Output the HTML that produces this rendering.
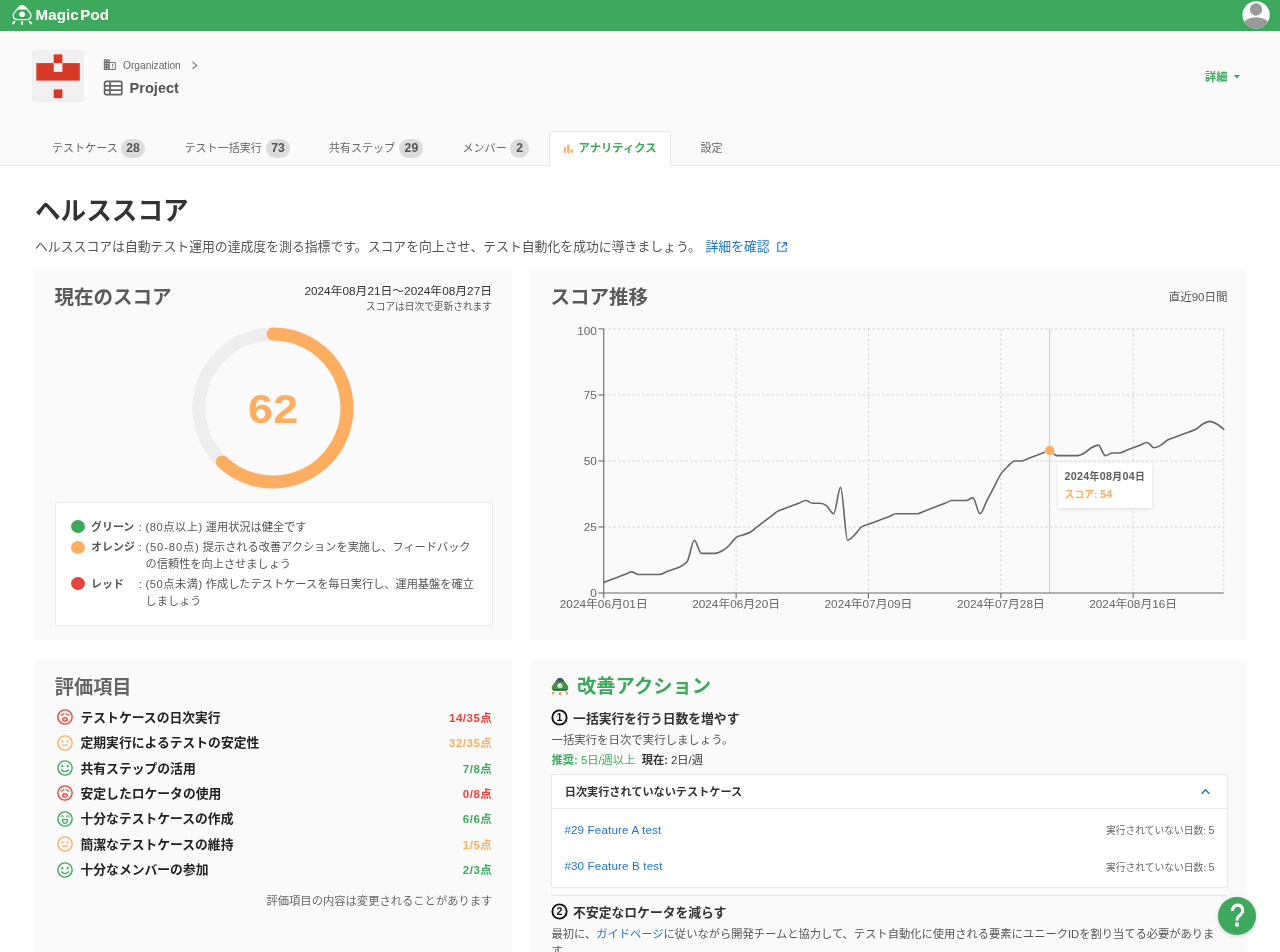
<!DOCTYPE html>
<html lang="ja">
<head>
<meta charset="utf-8">
<title>MagicPod - ヘルススコア</title>
<style>
*{box-sizing:border-box;margin:0;padding:0}
html,body{width:1280px;height:952px;overflow:hidden;background:#fff}
body{font-family:"Liberation Sans","Noto Sans CJK JP",sans-serif;color:#555;position:relative;-webkit-font-smoothing:antialiased}
.abs{position:absolute;white-space:nowrap}
b,.b{font-weight:700}
#hdr{left:0;top:0;width:1280px;height:30.5px;background:#3da95c}
#sub{left:0;top:30.5px;width:1280px;height:135px;background:#fafafa;border-bottom:1px solid #e9e9e9}
.logo{left:35.6px;top:4px;height:22px;line-height:22px;font-size:15.05px;font-weight:700;color:#fff;letter-spacing:0.1px}
.org{left:123px;top:57px;height:18px;line-height:18px;font-size:10.2px;color:#666}
.prj{left:129.5px;top:78px;height:20px;line-height:20px;font-size:14.6px;font-weight:700;color:#555}
.tab{top:138px;height:20px;line-height:20px;font-size:11.05px;color:#666}
.badge{top:138.6px;height:19px;line-height:19px;border-radius:9.5px;background:#dcdcdc;color:#555;font-size:12.2px;font-weight:700;text-align:center}
#atab{left:548.5px;top:131px;width:122px;height:35px;background:#fff;border:1px solid #e6e6e6;border-bottom:none;border-radius:4px 4px 0 0}
h1{left:35px;top:194px;height:34px;line-height:34px;font-size:25.6px;font-weight:700;color:#333}
.lead{left:35px;top:237px;height:20px;line-height:20px;font-size:12.85px;color:#555}
.card{background:#fafafa;border-radius:2px}
.ct{font-size:19.5px;font-weight:700;color:#5a5a5a;height:28px;line-height:28px}
.rowt{height:20px;line-height:20px;font-size:12.8px;font-weight:700;color:#222}
.rows{height:20px;line-height:20px;font-size:11.5px;font-weight:700;letter-spacing:0.5px}
.lg{font-size:11.2px;color:#555;height:17.3px;line-height:17.3px}
.lgb{font-weight:700;color:#555;font-size:10.95px}
.ls{letter-spacing:0.55px}
.dot{width:13.7px;height:13.1px;border-radius:50%}
svg text{font-family:"Liberation Sans","Noto Sans CJK JP",sans-serif}
.ih{font-size:12.8px;font-weight:700;color:#333;height:20px;line-height:20px}
.ip{font-size:11.28px;color:#555;height:18px;line-height:18px}
a{color:#1f75c9;text-decoration:none}
.d{font-size:10.7px}
</style>
</head>
<body>
<div id="wrap" style="position:absolute;left:0;top:0;width:1280px;height:952px;overflow:hidden;will-change:transform">
<!-- header -->
<div id="hdr" class="abs"></div>
<svg class="abs" style="left:11px;top:3px" width="23" height="24" viewBox="0 0 23 24" fill="none" stroke="#fff" stroke-width="1.25" stroke-linecap="round" stroke-linejoin="round">
  <path d="M11.1 2.5 C9.3 2.5 8.2 3.6 7.2 4.9 L3.0 10.2 C1.2 12.6 2.2 16.7 6.6 16.7 L15.6 16.7 C20.0 16.7 21.0 12.6 19.2 10.2 L15.0 4.9 C14.0 3.6 12.9 2.5 11.1 2.5 Z"/>
  <path d="M11.1 2.6 C9.5 2.6 8.4 3.6 7.5 4.8 L6.4 6.2 L15.8 6.2 L14.7 4.8 C13.8 3.6 12.7 2.6 11.1 2.6 Z" fill="#fff" stroke-width="0.6"/>
  <circle cx="11.1" cy="11.2" r="2.8" fill="#fff" stroke="none"/>
  <path d="M3.4 18.6 L2.2 20.4 M11.1 19.0 L11.1 21.0 M18.8 18.6 L20.0 20.4" stroke-width="1.9"/>
</svg>
<div class="abs logo">Magic<span style="margin-left:1.5px">Pod</span></div>
<svg class="abs" style="left:1242px;top:1px" width="29" height="29" viewBox="0 0 29 29">
  <defs><clipPath id="avc"><circle cx="14.1" cy="13.9" r="13.65"/></clipPath></defs>
  <circle cx="14.1" cy="13.9" r="13.65" fill="#fff"/>
  <g clip-path="url(#avc)" fill="#999"><circle cx="14.05" cy="8.5" r="6.15"/><ellipse cx="14.1" cy="27" rx="14.5" ry="10.8"/></g>
</svg>

<!-- project header -->
<div id="sub" class="abs"></div>
<svg class="abs" style="left:32px;top:50px" width="52" height="52" viewBox="0 0 52 52">
  <rect width="52" height="52" rx="3" fill="#f0f0f0"/>
  <g fill="#d63a27"><rect x="21.7" y="4.4" width="8.7" height="8.8"/><rect x="4.3" y="13.1" width="43.5" height="17.5"/><rect x="21.7" y="39.4" width="8.7" height="8.7"/></g>
  <rect x="21.7" y="13.1" width="8.7" height="8.8" fill="#f0f0f0"/>
</svg>
<svg class="abs" style="left:103px;top:59px" width="14" height="12" viewBox="0 0 14 12">
  <rect x="0.8" y="0.4" width="6" height="10.6" fill="#707070"/>
  <g fill="#f4f4f4"><rect x="1.9" y="1.6" width="1" height="0.9"/><rect x="1.9" y="4" width="1" height="0.9"/><rect x="1.9" y="6.4" width="1" height="0.9"/><rect x="1.9" y="8.8" width="1" height="0.9"/><rect x="4" y="1.7" width="1.6" height="0.7"/><rect x="4" y="4.1" width="1.6" height="0.7"/><rect x="4" y="6.5" width="1.6" height="0.7"/><rect x="4" y="8.9" width="1.6" height="0.7"/></g>
  <path d="M6.8 3.5 H12.3 V10.5 H6.8" fill="none" stroke="#707070" stroke-width="1"/>
  <path d="M9.6 5 V7.6 M9.6 8.4 V9.2" stroke="#707070" stroke-width="1" fill="none"/>
</svg>
<div class="abs org">Organization</div>
<svg class="abs" style="left:191px;top:61px" width="8" height="9" viewBox="0 0 8 9" fill="none" stroke="#777" stroke-width="1.1"><path d="M1.6 1 L5.8 4.4 L1.6 7.8"/></svg>
<svg class="abs" style="left:103px;top:80px" width="21" height="16" viewBox="0 0 21 16" fill="none" stroke="#646464" stroke-width="1.7" stroke-linejoin="round">
  <rect x="1.6" y="1.3" width="17.2" height="13.4" rx="1.8"/><path d="M1.6 5.8 H18.8 M1.6 10.2 H18.8 M7 1.3 V14.7"/>
</svg>
<div class="abs prj">Project</div>
<div class="abs" style="left:1205px;top:66.8px;height:20px;line-height:20px;font-size:11.2px;font-weight:700;color:#3da95c">詳細</div>
<svg class="abs" style="left:1233px;top:73.6px" width="8" height="6" viewBox="0 0 8 6"><path d="M0.7 1 H7.1 L3.9 4.6 Z" fill="#3da95c"/></svg>

<!-- tabs -->
<div id="atab" class="abs"></div>
<div class="abs tab" style="left:52px">テストケース</div><div class="abs badge" style="left:121.2px;width:23.8px">28</div>
<div class="abs tab" style="left:184.5px">テスト一括実行</div><div class="abs badge" style="left:266.2px;width:23.8px">73</div>
<div class="abs tab" style="left:328.8px">共有ステップ</div><div class="abs badge" style="left:399.4px;width:24px">29</div>
<div class="abs tab" style="left:462.5px">メンバー</div><div class="abs badge" style="left:510.4px;width:18.6px">2</div>
<svg class="abs" style="left:563px;top:143px" width="11" height="11" viewBox="0 0 11 11" fill="#ffad60"><rect x="0.8" y="4.1" width="2.2" height="6" rx="0.8"/><rect x="4.1" y="1.4" width="2.2" height="8.7" rx="0.8"/><rect x="7.6" y="6.5" width="2.2" height="3.6" rx="0.8"/></svg>
<div class="abs tab b" style="left:578.6px;color:#3da95c;font-size:11.3px">アナリティクス</div>
<div class="abs tab" style="left:700.5px">設定</div>

<!-- heading -->
<div class="abs" id="h1wrap"></div>
<h1 class="abs">ヘルススコア</h1>
<div class="abs lead">ヘルススコアは自動テスト運用の達成度を測る指標です。スコアを向上させ、テスト自動化を成功に導きましょう。 <a href="#" style="margin-left:1px">詳細を確認</a></div>
<svg class="abs" style="left:776px;top:241px" width="12" height="12" viewBox="0 0 12 12" fill="none" stroke="#1f75c9" stroke-width="1.1"><path d="M5 1.8 H1.8 V10.2 H10.2 V7"/><path d="M6.8 1.6 H10.4 V5.2 M10.4 1.6 L5.6 6.4"/></svg>

<!-- card 1 : current score -->
<div class="abs card" style="left:35.2px;top:269.2px;width:476.7px;height:370.4px"></div>
<div class="abs ct" style="left:54.5px;top:282.5px">現在のスコア</div>
<div class="abs" style="right:788px;top:282px;height:18px;line-height:18px;font-size:11.8px;color:#333">2024年08月21日～2024年08月27日</div>
<div class="abs" style="right:788px;top:297.5px;height:18px;line-height:18px;font-size:9.7px;color:#555">スコアは日次で更新されます</div>
<svg class="abs" style="left:183.2px;top:317.7px" width="180" height="180" viewBox="0 0 180 180" fill="none">
  <circle cx="90" cy="90" r="74" stroke="#eeeeee" stroke-width="13"/>
  <path d="M90 16 A74 74 0 1 1 39.34 143.94" stroke="#ffad60" stroke-width="13" stroke-linecap="round"/>
  <text transform="translate(90.3 105.4) scale(1.085 1)" x="0" y="0" text-anchor="middle" font-size="41.5" font-weight="700" fill="#ffad60" letter-spacing="0.3">62</text>
</svg>
<div class="abs" style="left:55.1px;top:502.1px;width:437.7px;height:123.8px;background:#fff;border:1px solid #ececec;border-radius:2px"></div>
<div class="abs dot" style="left:71.3px;top:520.2px;background:#3da95c"></div>
<div class="abs dot" style="left:71.3px;top:540.5px;background:#ffad60"></div>
<div class="abs dot" style="left:71.3px;top:577.2px;background:#e5453c"></div>
<div class="abs lg lgb" style="left:91.1px;top:518.6px">グリーン</div><div class="abs lg" style="left:138.8px;top:518.6px">:</div><div class="abs lg" style="left:145.4px;top:518.6px"><span class="ls">(80点以上)</span> 運用状況は健全です</div>
<div class="abs lg lgb" style="left:91.1px;top:538.9px">オレンジ</div><div class="abs lg" style="left:138.8px;top:538.9px">:</div><div class="abs lg" style="left:145.4px;top:538.9px"><span class="ls" style="letter-spacing:0.88px">(50-80点)</span> 提示される改善アクションを実施し、フィードバック</div>
<div class="abs lg" style="left:145.6px;top:556.2px">の信頼性を向上させましょう</div>
<div class="abs lg lgb" style="left:91.1px;top:575.6px">レッド</div><div class="abs lg" style="left:138.8px;top:575.6px">:</div><div class="abs lg" style="left:145.4px;top:575.6px"><span class="ls">(50点未満)</span> 作成したテストケースを毎日実行し、運用基盤を確立</div>
<div class="abs lg" style="left:145.6px;top:592.9px">しましょう</div>

<!-- card 2 : chart -->
<div class="abs card" style="left:531.2px;top:269.2px;width:715.6px;height:370.4px"></div>
<div class="abs ct" style="left:550.6px;top:282.5px">スコア推移</div>
<div class="abs" style="right:52.5px;top:288px;height:18px;line-height:18px;font-size:11.5px;color:#555">直近90日間</div>
<svg class="abs" style="left:0;top:0" width="1280" height="660" viewBox="0 0 1280 660" fill="none">
  <g stroke="#cfcfcf" stroke-width="0.9" stroke-dasharray="2.4 2.4"><line x1="603.75" y1="526.98" x2="1223.75" y2="526.98"/><line x1="603.75" y1="460.95" x2="1223.75" y2="460.95"/><line x1="603.75" y1="394.93" x2="1223.75" y2="394.93"/><line x1="603.75" y1="328.90" x2="1223.75" y2="328.90"/><line x1="736.11" y1="328.90" x2="736.11" y2="593.00"/><line x1="868.47" y1="328.90" x2="868.47" y2="593.00"/><line x1="1000.83" y1="328.90" x2="1000.83" y2="593.00"/><line x1="1133.19" y1="328.90" x2="1133.19" y2="593.00"/><line x1="1223.75" y1="328.90" x2="1223.75" y2="593.00"/></g>
  <line x1="1049.6" y1="328.9" x2="1049.6" y2="593" stroke="#cccccc" stroke-width="1"/>
  <g stroke="#6a6a6a" stroke-width="1.1"><line x1="603.75" y1="328.9" x2="603.75" y2="593"/><line x1="603.75" y1="593" x2="1223.75" y2="593"/><line x1="598.45" y1="593.00" x2="603.75" y2="593.00"/><line x1="598.45" y1="526.98" x2="603.75" y2="526.98"/><line x1="598.45" y1="460.95" x2="603.75" y2="460.95"/><line x1="598.45" y1="394.93" x2="603.75" y2="394.93"/><line x1="598.45" y1="328.90" x2="603.75" y2="328.90"/><line x1="603.75" y1="593.00" x2="603.75" y2="598.30"/><line x1="736.11" y1="593.00" x2="736.11" y2="598.30"/><line x1="868.47" y1="593.00" x2="868.47" y2="598.30"/><line x1="1000.83" y1="593.00" x2="1000.83" y2="598.30"/><line x1="1133.19" y1="593.00" x2="1133.19" y2="598.30"/></g>
  <g fill="#666" font-size="11.8"><text x="596.85" y="596.90" text-anchor="end">0</text><text x="596.85" y="530.88" text-anchor="end">25</text><text x="596.85" y="464.85" text-anchor="end">50</text><text x="596.85" y="398.82" text-anchor="end">75</text><text x="596.85" y="335.40" text-anchor="end">100</text><text x="603.75" y="607.60" text-anchor="middle">2024年06月01日</text><text x="736.11" y="607.60" text-anchor="middle">2024年06月20日</text><text x="868.47" y="607.60" text-anchor="middle">2024年07月09日</text><text x="1000.83" y="607.60" text-anchor="middle">2024年07月28日</text><text x="1133.19" y="607.60" text-anchor="middle">2024年08月16日</text></g>
  <path d="M603.75,582.44C606.07,581.56,608.39,580.68,610.72,579.79C613.04,578.91,615.36,578.03,617.68,577.15C620.00,576.27,622.33,575.39,624.65,574.51C626.97,573.63,629.29,571.87,631.62,571.87C633.94,571.87,636.26,574.51,638.58,574.51C640.90,574.51,643.23,574.51,645.55,574.51C647.87,574.51,650.19,574.51,652.51,574.51C654.84,574.51,657.16,574.51,659.48,574.51C661.80,574.51,664.12,572.75,666.45,571.87C668.77,570.99,671.09,570.11,673.41,569.23C675.74,568.35,678.06,567.91,680.38,566.59C682.70,565.27,685.02,564.83,687.35,561.31C689.67,557.79,691.99,540.18,694.31,540.18C696.63,540.18,698.96,553.38,701.28,553.38C703.60,553.38,705.92,553.38,708.24,553.38C710.57,553.38,712.89,553.38,715.21,553.38C717.53,553.38,719.85,552.06,722.18,550.74C724.50,549.42,726.82,547.66,729.14,545.46C731.47,543.26,733.79,539.30,736.11,537.54C738.43,535.78,740.75,535.78,743.08,534.90C745.40,534.02,747.72,533.58,750.04,532.26C752.36,530.94,754.69,528.74,757.01,526.98C759.33,525.21,761.65,523.45,763.97,521.69C766.30,519.93,768.62,518.17,770.94,516.41C773.26,514.65,775.59,512.45,777.91,511.13C780.23,509.81,782.55,509.37,784.87,508.49C787.20,507.61,789.52,506.73,791.84,505.85C794.16,504.97,796.48,504.09,798.81,503.21C801.13,502.33,803.45,500.56,805.77,500.56C808.09,500.56,810.42,503.21,812.74,503.21C815.06,503.21,817.38,503.21,819.71,503.21C822.03,503.21,824.35,504.09,826.67,505.85C828.99,507.61,831.32,513.77,833.64,513.77C835.96,513.77,838.28,487.36,840.60,487.36C842.93,487.36,845.25,540.18,847.57,540.18C849.89,540.18,852.21,537.10,854.54,534.90C856.86,532.70,859.18,528.74,861.50,526.98C863.82,525.21,866.15,525.21,868.47,524.33C870.79,523.45,873.11,522.57,875.44,521.69C877.76,520.81,880.08,519.93,882.40,519.05C884.72,518.17,887.05,517.29,889.37,516.41C891.69,515.53,894.01,513.77,896.33,513.77C898.66,513.77,900.98,513.77,903.30,513.77C905.62,513.77,907.94,513.77,910.27,513.77C912.59,513.77,914.91,513.77,917.23,513.77C919.56,513.77,921.88,512.01,924.20,511.13C926.52,510.25,928.84,509.37,931.17,508.49C933.49,507.61,935.81,506.73,938.13,505.85C940.45,504.97,942.78,504.09,945.10,503.21C947.42,502.33,949.74,500.56,952.06,500.56C954.39,500.56,956.71,500.56,959.03,500.56C961.35,500.56,963.68,500.56,966.00,500.56C968.32,500.56,970.64,497.92,972.96,497.92C975.29,497.92,977.61,513.77,979.93,513.77C982.25,513.77,984.57,504.97,986.90,500.56C989.22,496.16,991.54,491.76,993.86,487.36C996.18,482.96,998.51,477.68,1000.83,474.15C1003.15,470.63,1005.47,468.43,1007.79,466.23C1010.12,464.03,1012.44,460.95,1014.76,460.95C1017.08,460.95,1019.41,460.95,1021.73,460.95C1024.05,460.95,1026.37,459.19,1028.69,458.31C1031.02,457.43,1033.34,456.55,1035.66,455.67C1037.98,454.79,1040.30,453.91,1042.63,453.03C1044.95,452.15,1047.27,450.39,1049.59,450.39C1051.91,450.39,1054.24,455.67,1056.56,455.67C1058.88,455.67,1061.20,455.67,1063.53,455.67C1065.85,455.67,1068.17,455.67,1070.49,455.67C1072.81,455.67,1075.14,455.67,1077.46,455.67C1079.78,455.67,1082.10,454.35,1084.42,453.03C1086.75,451.71,1089.07,449.07,1091.39,447.75C1093.71,446.42,1096.03,445.10,1098.36,445.10C1100.68,445.10,1103.00,455.67,1105.32,455.67C1107.65,455.67,1109.97,453.03,1112.29,453.03C1114.61,453.03,1116.93,453.03,1119.26,453.03C1121.58,453.03,1123.90,451.27,1126.22,450.39C1128.54,449.51,1130.87,448.63,1133.19,447.75C1135.51,446.86,1137.83,445.98,1140.15,445.10C1142.48,444.22,1144.80,442.46,1147.12,442.46C1149.44,442.46,1151.76,447.75,1154.09,447.75C1156.41,447.75,1158.73,446.42,1161.05,445.10C1163.38,443.78,1165.70,441.14,1168.02,439.82C1170.34,438.50,1172.66,438.06,1174.99,437.18C1177.31,436.30,1179.63,435.42,1181.95,434.54C1184.27,433.66,1186.60,432.78,1188.92,431.90C1191.24,431.02,1193.56,430.58,1195.88,429.26C1198.21,427.94,1200.53,425.30,1202.85,423.98C1205.17,422.66,1207.50,421.34,1209.82,421.34C1212.14,421.34,1214.46,422.66,1216.78,423.98C1219.11,425.30,1221.43,427.28,1223.75,429.26" stroke="#666" stroke-width="1.6" stroke-linejoin="round" stroke-linecap="round"/>
  <circle cx="1049.6" cy="450.4" r="5.2" fill="#fafafa"/>
  <circle cx="1049.6" cy="450.4" r="4.6" fill="#ffad60"/>
</svg>
<div class="abs" style="left:1058px;top:463px;width:94px;height:44.6px;background:#fff;box-shadow:0 1px 4px rgba(0,0,0,0.12)"></div>
<div class="abs b" style="left:1064.4px;top:467.2px;height:18px;line-height:18px;font-size:9.8px;color:#5c5c5c;letter-spacing:0.35px"><span class="d">2024</span>年<span class="d">08</span>月<span class="d">04</span>日</div>
<div class="abs b" style="left:1064.4px;top:484.9px;height:18px;line-height:18px;font-size:9.8px;color:#ffad60;letter-spacing:0.1px">スコア: <span class="d">54</span></div>

<!-- card 3 : items -->
<div class="abs card" style="left:35.2px;top:659.6px;width:476.7px;height:300px"></div>
<div class="abs ct" style="left:54.8px;top:673.8px;color:#666;font-size:19.2px">評価項目</div>
<svg class="abs" style="left:56.50px;top:709.10px" width="16" height="16" viewBox="0 0 16 16" fill="none" stroke="#e5453c" stroke-width="1.4" stroke-linecap="round" stroke-linejoin="round"><circle cx="8" cy="8" r="7.15"/><path d="M4.2 6.1 Q5.6 5.9 6.8 4.7 M11.8 6.1 Q10.4 5.9 9.2 4.7" stroke-width="1.5" opacity="0.8"/><path fill-rule="evenodd" d="M8 7.95 C9.9 7.95 11.2 9.0 11.2 10.4 C11.2 11.8 9.9 12.85 8 12.85 C6.1 12.85 4.8 11.8 4.8 10.4 C4.8 9.0 6.1 7.95 8 7.95 Z M8 9.65 C7.1 9.65 6.55 9.95 6.55 10.4 C6.55 10.85 7.1 11.15 8 11.15 C8.9 11.15 9.45 10.85 9.45 10.4 C9.45 9.95 8.9 9.65 8 9.65 Z" fill="#e5453c" stroke="none" opacity="0.85"/></svg><div class="abs rowt" style="left:80.5px;top:707.60px">テストケースの日次実行</div><div class="abs rows" style="right:787.7px;top:707.60px;color:#e5453c">14/35点</div><svg class="abs" style="left:56.50px;top:734.55px" width="16" height="16" viewBox="0 0 16 16" fill="none" stroke="#ffad60" stroke-width="1.4" stroke-linecap="round" stroke-linejoin="round"><circle cx="8" cy="8" r="7.15"/><circle cx="5.4" cy="6.3" r="1.1" fill="#ffad60" stroke="none"/><circle cx="10.6" cy="6.3" r="1.1" fill="#ffad60" stroke="none"/><path d="M5.7 10.2 H10.3" stroke-width="1.25"/></svg><div class="abs rowt" style="left:80.5px;top:733.05px">定期実行によるテストの安定性</div><div class="abs rows" style="right:787.7px;top:733.05px;color:#ffad60">32/35点</div><svg class="abs" style="left:56.50px;top:760.00px" width="16" height="16" viewBox="0 0 16 16" fill="none" stroke="#3da95c" stroke-width="1.4" stroke-linecap="round" stroke-linejoin="round"><circle cx="8" cy="8" r="7.15"/><circle cx="5.3" cy="6.2" r="1.15" fill="#3da95c" stroke="none"/><circle cx="10.7" cy="6.2" r="1.15" fill="#3da95c" stroke="none"/><path d="M4.3 9.8 Q8 13.6 11.7 9.8" stroke-width="1.25"/></svg><div class="abs rowt" style="left:80.5px;top:758.50px">共有ステップの活用</div><div class="abs rows" style="right:787.7px;top:758.50px;color:#3da95c">7/8点</div><svg class="abs" style="left:56.50px;top:785.45px" width="16" height="16" viewBox="0 0 16 16" fill="none" stroke="#e5453c" stroke-width="1.4" stroke-linecap="round" stroke-linejoin="round"><circle cx="8" cy="8" r="7.15"/><path d="M4.2 6.1 Q5.6 5.9 6.8 4.7 M11.8 6.1 Q10.4 5.9 9.2 4.7" stroke-width="1.5" opacity="0.8"/><path fill-rule="evenodd" d="M8 7.95 C9.9 7.95 11.2 9.0 11.2 10.4 C11.2 11.8 9.9 12.85 8 12.85 C6.1 12.85 4.8 11.8 4.8 10.4 C4.8 9.0 6.1 7.95 8 7.95 Z M8 9.65 C7.1 9.65 6.55 9.95 6.55 10.4 C6.55 10.85 7.1 11.15 8 11.15 C8.9 11.15 9.45 10.85 9.45 10.4 C9.45 9.95 8.9 9.65 8 9.65 Z" fill="#e5453c" stroke="none" opacity="0.85"/></svg><div class="abs rowt" style="left:80.5px;top:783.95px">安定したロケータの使用</div><div class="abs rows" style="right:787.7px;top:783.95px;color:#e5453c">0/8点</div><svg class="abs" style="left:56.50px;top:810.90px" width="16" height="16" viewBox="0 0 16 16" fill="none" stroke="#3da95c" stroke-width="1.4" stroke-linecap="round" stroke-linejoin="round"><circle cx="8" cy="8" r="7.15"/><path d="M3.9 5.9 Q5.2 3.1 6.5 5.9 M9.5 5.9 Q10.8 3.1 12.1 5.9" stroke-width="1.15" opacity="0.85"/><path d="M5.35 8.6 H10.65 Q10.6 12.3 8 12.3 Q5.4 12.3 5.35 8.6 Z" stroke-width="1.2"/></svg><div class="abs rowt" style="left:80.5px;top:809.40px">十分なテストケースの作成</div><div class="abs rows" style="right:787.7px;top:809.40px;color:#3da95c">6/6点</div><svg class="abs" style="left:56.50px;top:836.35px" width="16" height="16" viewBox="0 0 16 16" fill="none" stroke="#ffad60" stroke-width="1.4" stroke-linecap="round" stroke-linejoin="round"><circle cx="8" cy="8" r="7.15"/><circle cx="5.4" cy="6.3" r="1.1" fill="#ffad60" stroke="none"/><circle cx="10.6" cy="6.3" r="1.1" fill="#ffad60" stroke="none"/><path d="M5.7 10.2 H10.3" stroke-width="1.25"/></svg><div class="abs rowt" style="left:80.5px;top:834.85px">簡潔なテストケースの維持</div><div class="abs rows" style="right:787.7px;top:834.85px;color:#ffad60">1/5点</div><svg class="abs" style="left:56.50px;top:861.80px" width="16" height="16" viewBox="0 0 16 16" fill="none" stroke="#3da95c" stroke-width="1.4" stroke-linecap="round" stroke-linejoin="round"><circle cx="8" cy="8" r="7.15"/><circle cx="5.3" cy="6.2" r="1.15" fill="#3da95c" stroke="none"/><circle cx="10.7" cy="6.2" r="1.15" fill="#3da95c" stroke="none"/><path d="M4.3 9.8 Q8 13.6 11.7 9.8" stroke-width="1.25"/></svg><div class="abs rowt" style="left:80.5px;top:860.30px">十分なメンバーの参加</div><div class="abs rows" style="right:787.7px;top:860.30px;color:#3da95c">2/3点</div>
<div class="abs" style="right:787.6px;top:892.2px;height:18px;line-height:18px;font-size:11.3px;color:#666">評価項目の内容は変更されることがあります</div>

<!-- card 4 : actions -->
<div class="abs card" style="left:531.2px;top:659.6px;width:715.6px;height:300px"></div>
<svg class="abs" style="left:550.1px;top:676px" width="20" height="20" viewBox="0 0 20 20">
  <defs><clipPath id="rk"><path d="M10 1.7 C8.6 1.7 7.7 2.5 6.8 3.7 L2.6 9.2 C0.7 11.6 1.7 14.8 5.4 14.8 L14.6 14.8 C18.3 14.8 19.3 11.6 17.4 9.2 L13.2 3.7 C12.3 2.5 11.4 1.7 10 1.7 Z"/></clipPath></defs>
  <g clip-path="url(#rk)"><rect width="20" height="20" fill="#44913f"/><rect width="20" height="5.6" fill="#3a5a6b"/><rect y="13.4" width="20" height="3" fill="#3a5a6b"/></g>
  <circle cx="10" cy="9.8" r="2.5" fill="#fff"/><path d="M8.2 11.5 A2.5 2.5 0 0 0 11.7 8 Z" fill="#9fd8c4"/>
  <g stroke="#f5802a" stroke-width="1.8" stroke-linecap="round" opacity="0.92"><path d="M3.6 16.3 L2.8 17.6 M10 16.6 L10 18.4 M16.4 16.3 L17.2 17.6"/></g>
</svg>
<div class="abs ct" style="left:577px;top:673px;color:#3da95c;font-size:19.3px">改善アクション</div>
<div class="abs ih" style="left:551px;top:708.5px"><svg style="position:absolute;left:0px;top:0.6px;overflow:visible" width="17" height="17" viewBox="0 0 17 17"><circle cx="8.5" cy="8.5" r="7.15" fill="none" stroke="#111" stroke-width="1.85"/><text x="8.5" y="12.2" text-anchor="middle" font-size="10.6" font-weight="700" fill="#111">1</text></svg><span style="margin-left:22.1px"></span>一括実行を行う日数を増やす</div>
<div class="abs ip" style="left:551.5px;top:730.5px;font-size:11.42px">一括実行を日次で実行しましょう。</div>
<div class="abs ip" style="left:551.5px;top:751px"><span style="color:#3da95c"><b>推奨:</b> 5日/週以上</span>&nbsp; <span style="color:#333"><b>現在:</b> 2日/週</span></div>
<div class="abs" style="left:551.2px;top:774.3px;width:676.4px;height:113.4px;background:#fff;border:1px solid #e8e8e8;border-radius:2px"></div>
<div class="abs" style="left:552px;top:808px;width:674.5px;height:1px;background:#e8e8e8"></div>
<div class="abs b" style="left:564.8px;top:782.6px;height:18px;line-height:18px;font-size:11.15px;color:#333">日次実行されていないテストケース</div>
<svg class="abs" style="left:1199.5px;top:786.5px" width="11" height="9" viewBox="0 0 11 9" fill="none" stroke="#1f75c9" stroke-width="1.4"><path d="M1.6 6.8 L5.5 2.8 L9.4 6.8"/></svg>
<div class="abs" style="left:564.4px;top:820.9px;height:18px;line-height:18px;font-size:11.6px;letter-spacing:0.16px"><a href="#">#29 Feature A test</a></div>
<div class="abs" style="left:564.4px;top:857.3px;height:18px;line-height:18px;font-size:11.6px;letter-spacing:0.16px"><a href="#">#30 Feature B test</a></div>
<div class="abs" style="right:65.5px;top:821.3px;height:18px;line-height:18px;font-size:9.75px;color:#666">実行されていない日数: <span style="font-size:10.6px">5</span></div>
<div class="abs" style="right:65.5px;top:857.5px;height:18px;line-height:18px;font-size:9.75px;color:#666">実行されていない日数: <span style="font-size:10.6px">5</span></div>
<div class="abs" style="left:551.2px;top:894.6px;width:676px;height:1px;background:#e6e6e6"></div>
<div class="abs ih" style="left:551px;top:902.6px"><svg style="position:absolute;left:0px;top:0.6px;overflow:visible" width="17" height="17" viewBox="0 0 17 17"><circle cx="8.5" cy="8.5" r="7.15" fill="none" stroke="#111" stroke-width="1.85"/><text x="8.5" y="12.2" text-anchor="middle" font-size="10.6" font-weight="700" fill="#111">2</text></svg><span style="margin-left:22.1px"></span>不安定なロケータを減らす</div>
<div class="abs ip" style="left:551.5px;top:926.2px;width:676px;white-space:normal;line-height:16.6px;height:auto">最初に、<a href="#">ガイドページ</a>に従いながら開発チームと協力して、テスト自動化に使用される要素にユニークIDを割り当てる必要があります。</div>

<!-- help -->
<div class="abs" style="left:1217.7px;top:896.5px;width:38.8px;height:38.8px;border-radius:50%;background:#3da95c;box-shadow:0 1px 4px rgba(0,0,0,0.18)"></div>
<div class="abs" style="left:1217.7px;top:896.5px;width:38.8px;height:38.8px;color:#fff;font-size:31px;font-weight:400;text-align:center;line-height:37.6px;transform:scaleX(0.84);-webkit-text-stroke:0.8px #fff">?</div>
</div>
</body>
</html>
